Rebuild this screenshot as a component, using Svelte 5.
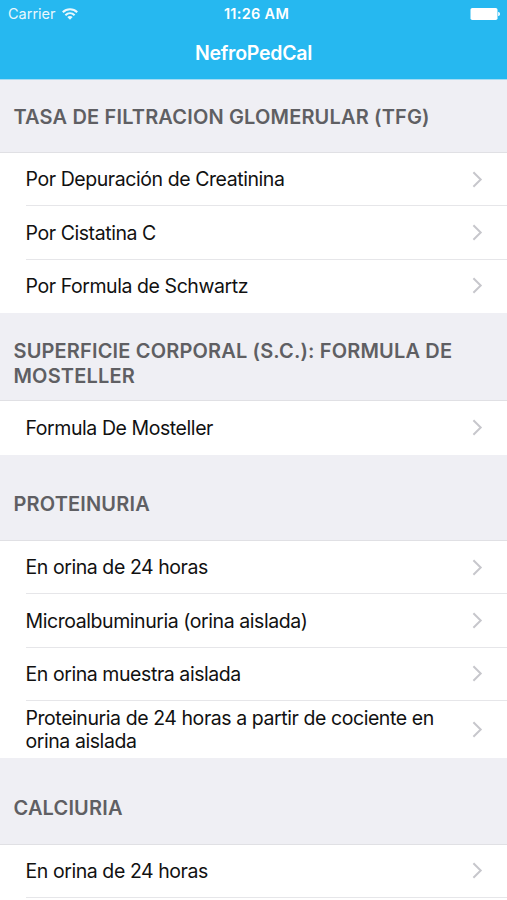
<script lang="ts">
  interface Section {
    title: string;
    size: string;
    items: string[];
    more?: boolean;
  }

  const sections: Section[] = [
    {
      title: 'Tasa de filtracion glomerular (TFG)',
      size: 'first',
      items: ['Por Depuración de Creatinina', 'Por Cistatina C', 'Por Formula de Schwartz'],
    },
    {
      title: 'Superficie corporal (S.C.): Formula de Mosteller',
      size: 'double',
      items: ['Formula De Mosteller'],
    },
    {
      title: 'Proteinuria',
      size: 'single',
      items: [
        'En orina de 24 horas',
        'Microalbuminuria (orina aislada)',
        'En orina muestra aislada',
        'Proteinuria de 24 horas a partir de cociente en orina aislada',
      ],
    },
    {
      title: 'Calciuria',
      size: 'single',
      items: ['En orina de 24 horas'],
      more: true,
    },
  ];
</script>

<div class="screen">
  <header>
    <div class="status-bar">
      <div class="carrier">
        <span>Carrier</span>
        <svg width="16" height="12" viewBox="0 0 16 12" fill="none" stroke="#fff" stroke-width="2.1">
          <path d="M.8 4.2C4.8 .2 11.2 .2 15.2 4.2" />
          <path d="M3.4 7.2C6.1 4.6 9.9 4.6 12.6 7.2" />
          <path d="M8 11.8L5.3 9C6.8 7.5 9.2 7.5 10.7 9Z" fill="#fff" stroke="none" />
        </svg>
      </div>
      <span class="time">11:26 AM</span>
      <svg class="battery" width="31" height="12" viewBox="0 0 31 12" fill="#fff">
        <rect x="0.5" y="0" width="27" height="12" rx="1.8" />
        <path d="M28.2 4H28.8Q30 4.4 30 6T28.8 8H28.2Z" />
      </svg>
    </div>
    <h1>NefroPedCal</h1>
  </header>

  <main>
    {#each sections as section}
      <section>
        <h2 class={section.size}>{section.title}</h2>
        <ul class:more={section.more}>
          {#each section.items as item}
            <li class:tall={item.length > 40}>
              <div class="cell">
                <span>{item}</span>
                <svg width="11" height="17" viewBox="0 0 11 17" fill="none" stroke="#c7c7cc" stroke-width="2">
                  <path d="M1.4 1.3L8.7 8.5L1.4 15.7" />
                </svg>
              </div>
            </li>
          {/each}
        </ul>
      </section>
    {/each}
  </main>
</div>

<style>
  :global(body) {
    margin: 0;
    overflow: hidden;
  }

  .screen {
    height: 900px;
    overflow: hidden;
    background: #fff;
    font-family: Inter, sans-serif;
    color: #111;
  }

  header {
    box-sizing: border-box;
    height: 80px;
    background: #26b8f0;
    border-bottom: 1px solid #a5dcf4;
    color: #fff;
  }

  .status-bar {
    display: grid;
    grid-template-columns: 1fr auto 1fr;
    align-items: center;
    height: 27px;
    padding: 0 6px 0 8px;
    font-size: 14.5px;
  }

  .carrier {
    display: flex;
    align-items: center;
    gap: 6px;
    opacity: 0.9;
  }

  .time {
    padding-left: 4px;
    font-weight: 600;
    font-size: 14.5px;
    letter-spacing: 0.3px;
  }

  .battery {
    justify-self: end;
  }

  h1 {
    margin: 0;
    line-height: 52px;
    font-size: 19.5px;
    font-weight: 600;
    letter-spacing: -0.25px;
    text-align: center;
  }

  h2 {
    box-sizing: border-box;
    display: flex;
    align-items: center;
    margin: 0;
    padding: 0 40px 0 13.5px;
    border-bottom: 1px solid #e0e0e4;
    background: #efeff4;
    color: #5f5f63;
    font-size: 20px;
    line-height: 24.5px;
    font-weight: 600;
    letter-spacing: 0.16px;
    text-transform: uppercase;
  }

  .first {
    height: 73px;
    padding-top: 2px;
  }

  .double {
    height: 88px;
    padding-top: 14px;
  }

  .single {
    height: 86.4px;
    padding-top: 14.5px;
  }

  ul {
    margin: 0;
    padding: 0;
    list-style: none;
    background: #fff;
  }

  li {
    height: 53.4px;
    padding-left: 25.5px;
  }

  .tall {
    height: 57px;
  }

  .cell {
    box-sizing: border-box;
    display: flex;
    align-items: center;
    justify-content: space-between;
    height: 100%;
    padding-right: 24px;
    border-bottom: 1px solid #e6e6e9;
    font-size: 19.5px;
    line-height: 23px;
    letter-spacing: -0.43px;
  }

  .cell span {
    max-width: 425px;
    padding-top: 1.6px;
  }

  ul:not(.more) li:last-child .cell {
    border-bottom-color: transparent;
  }
</style>
